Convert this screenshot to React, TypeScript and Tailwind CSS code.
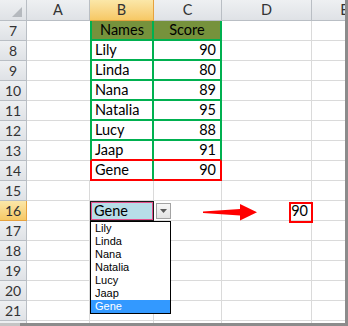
import React from 'react';

type Row = { n: number; b?: string; c?: string; d?: string };

const rows: Row[] = [
  { n: 7, b: 'Names', c: 'Score' },
  { n: 8, b: 'Lily', c: '90' },
  { n: 9, b: 'Linda', c: '80' },
  { n: 10, b: 'Nana', c: '89' },
  { n: 11, b: 'Natalia', c: '95' },
  { n: 12, b: 'Lucy', c: '88' },
  { n: 13, b: 'Jaap', c: '91' },
  { n: 14, b: 'Gene', c: '90' },
  { n: 15 },
  { n: 16, b: 'Gene', d: '90' },
  { n: 17 },
  { n: 18 },
  { n: 19 },
  { n: 20 },
  { n: 21 },
];

const listItems = ['Lily', 'Linda', 'Nana', 'Natalia', 'Lucy', 'Jaap', 'Gene'];

const grid = 'border-r border-b border-[#dadada]';
const head = 'flex items-center justify-center border-r border-b border-[#b9bec4] bg-gradient-to-b from-[#eef0f2] to-[#dfe2e6] text-[#333]';
const headSel = 'flex items-center justify-center border-r border-b border-[#e6a23e] bg-gradient-to-b from-[#fbe7a8] to-[#f6c864] text-[#333]';

function aClass(n: number) {
  if (n >= 7 && n <= 14) return 'border-b border-[#dadada]';
  return grid;
}

function bClass(n: number) {
  if (n === 7) return 'justify-center bg-[#76923c] border-l-2 border-r-2 border-b-2 border-[#00b050]';
  if (n === 13) return 'pl-[3px] border-l-2 border-r-2 border-b-2 border-[#00b050] border-b-[#ff0000]';
  if (n === 14) return 'pl-[3px] border-l-2 border-r-2 border-b-2 border-[#ff0000] border-r-[#00b050]';
  if (n > 7 && n < 13) return 'pl-[3px] border-l-2 border-r-2 border-b-2 border-[#00b050]';
  if (n === 16) return 'pl-[3px] bg-[#b7dde8] border border-[#1a1a1a] shadow-[inset_0_0_0_1px_#e4508c]';
  return grid;
}

function cClass(n: number) {
  if (n === 7) return 'justify-center bg-[#76923c] border-r-2 border-b-2 border-[#00b050]';
  if (n === 13) return 'justify-end pr-[4px] border-r-2 border-b-2 border-[#00b050] border-b-[#ff0000]';
  if (n === 14) return 'justify-end pr-[4px] border-r-2 border-b-2 border-[#ff0000]';
  if (n > 7 && n < 13) return 'justify-end pr-[4px] border-r-2 border-b-2 border-[#00b050]';
  return grid;
}

export default function App() {
  return (
    <div className="flex h-[326px] w-[348px] flex-col bg-[#8c8c8c] font-['Lato','Liberation_Sans',sans-serif] text-[14.5px] text-black">
      <div className="flex">
        <div className="relative h-[323px] w-[345px] overflow-hidden bg-white">
          {/* column headers */}
          <div className="flex h-[21px]">
            <div className={`${head} w-[27px] shrink-0 relative`}>
              <svg width="27" height="21" className="absolute left-0 top-0">
                <polygon points="12,17 22,17 22,7" fill="#b5b9be" />
              </svg>
            </div>
            <div className={`${head} w-[63px] shrink-0`}>A</div>
            <div className={`${headSel} w-[64px] shrink-0`}>B</div>
            <div className={`${head} w-[68px] shrink-0`}>C</div>
            <div className={`${head} w-[90px] shrink-0`}>D</div>
            <div className={`${head} w-[66px] shrink-0`}>E</div>
          </div>

          {rows.map((r) => (
            <div key={r.n} className="flex h-[20px]">
              <div className={`${r.n === 16 ? headSel : head} w-[27px] shrink-0 text-[14px]`}>{r.n}</div>
              <div className={`flex items-center w-[63px] shrink-0 ${aClass(r.n)}`} />
              <div className={`flex items-center w-[64px] shrink-0 ${bClass(r.n)}`}>{r.b}</div>
              <div className={`flex items-center w-[68px] shrink-0 ${cClass(r.n)}`}>{r.c}</div>
              <div className={`flex items-center justify-end pr-[3px] w-[90px] shrink-0 ${grid}`}>{r.d}</div>
              <div className={`w-[66px] shrink-0 ${grid}`} />
            </div>
          ))}
          {/* top sliver of row 22 */}
          <div className="flex h-[20px]">
            <div className={`${head} w-[27px] shrink-0`} />
            <div className={`w-[63px] shrink-0 ${grid}`} />
            <div className={`w-[64px] shrink-0 ${grid}`} />
            <div className={`w-[68px] shrink-0 ${grid}`} />
            <div className={`w-[90px] shrink-0 ${grid}`} />
            <div className={`w-[66px] shrink-0 ${grid}`} />
          </div>

          {/* validation dropdown button */}
          <div className="absolute left-[156px] top-[203px] flex h-[16px] w-[15px] items-center justify-center border border-[#a3a3a3] bg-gradient-to-b from-[#f7f7f7] to-[#e3e3e3]">
            <svg width="7" height="4">
              <polygon points="0,0 7,0 3.5,4" fill="#5a5a5a" />
            </svg>
          </div>

          {/* dropdown list */}
          <div className="absolute left-[90px] top-[221px] w-[81px] border border-black bg-white font-['Liberation_Sans',sans-serif] text-[11px]">
            {listItems.map((it, i) => (
              <div
                key={it}
                className={
                  i === listItems.length - 1
                    ? 'h-[13px] pl-[4px] leading-[13px] bg-[#3399ff] text-white'
                    : 'h-[13px] pl-[4px] leading-[13px]'
                }
              >
                {it}
              </div>
            ))}
          </div>

          {/* red arrow */}
          <svg width="55" height="19" className="absolute left-[203px] top-[203px]">
            <polygon points="0,8.5 37,6 37,1 54,9.3 37,17.5 37,12.5 0,10" fill="#ff0000" />
          </svg>

          {/* highlight box around result */}
          <div className="absolute left-[289px] top-[202px] h-[21px] w-[24px] border-2 border-[#ff0000]" />
        </div>
        <div className="w-[3px]" />
      </div>
      <div className="flex h-[3px]">
        <div className="w-[20px] bg-[#c4c4c4]" />
        <div className="flex-1" />
      </div>
    </div>
  );
}
